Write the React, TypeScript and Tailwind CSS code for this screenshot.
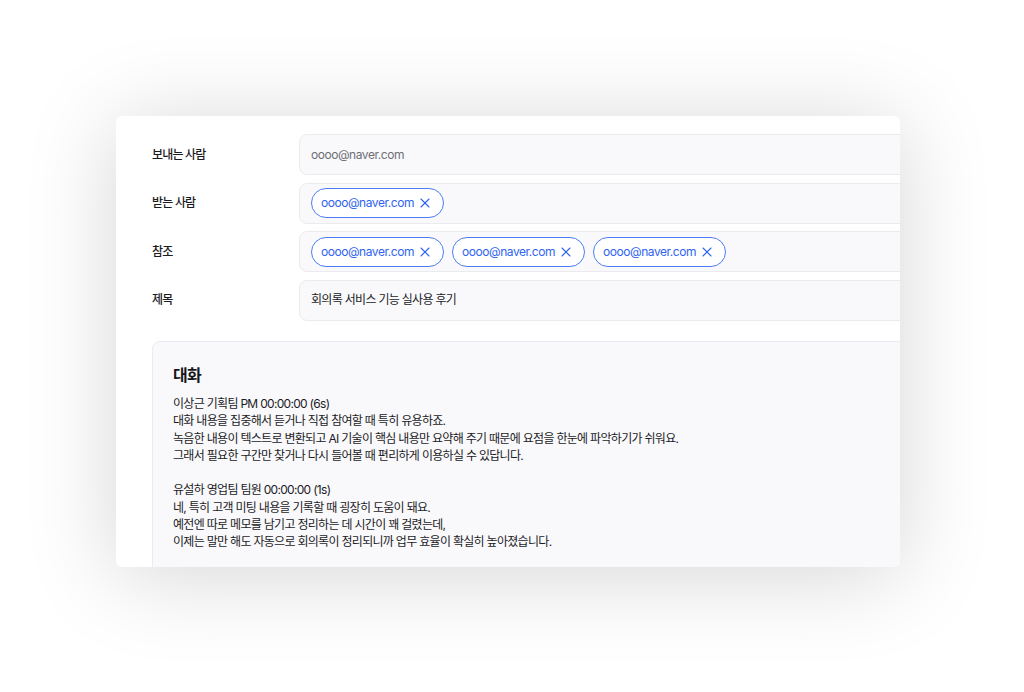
import { X } from "lucide-react";

const font = { fontFamily: '"Inter", "Noto Sans CJK KR", sans-serif' };

const Chip = ({ email }: { email: string }) => (
  <span className="flex h-[30px] items-center gap-[3px] rounded-full border border-[#4d7cf6] bg-white pl-[9px] pr-[10px] text-[12px] tracking-[-0.45px] text-[#2f64f0]">
    {email}
    <X className="h-[16px] w-[16px]" strokeWidth={1.6} />
  </span>
);

const Field = ({ label, children }: { label: string; children: React.ReactNode }) => (
  <div className="grid grid-cols-[147px_1fr] items-center">
    <span className="text-[12px] font-medium tracking-[-0.8px] text-[#1b1b1f]">{label}</span>
    <div className="flex h-[41px] w-[700px] items-center gap-[8px] rounded-[8px] border border-[#ebebef] bg-[#f9f9fb] px-[11px]">
      {children}
    </div>
  </div>
);

const App = () => {
  const email = "oooo@naver.com";
  return (
    <div className="min-h-screen bg-white pl-[116px] pt-[116px]" style={font}>
      <div className="h-[451px] w-[784px] overflow-hidden rounded-[6px] bg-white shadow-[0_8px_90px_rgba(0,0,0,0.17)]">
        <div className="flex w-[900px] flex-col gap-[7.5px] pl-[36px] pt-[18px]">
          <Field label="보내는 사람">
            <span className="text-[12px] tracking-[-0.45px] text-[#6e6e76]">{email}</span>
          </Field>
          <Field label="받는 사람">
            <Chip email={email} />
          </Field>
          <Field label="참조">
            <Chip email={email} />
            <Chip email={email} />
            <Chip email={email} />
          </Field>
          <Field label="제목">
            <span className="text-[12px] tracking-[-0.7px] text-[#1b1b1f]">회의록 서비스 기능 실사용 후기</span>
          </Field>

          <div className="mt-[13px] h-[300px] rounded-[8px] border border-[#ebebef] bg-[#f9f9fb] px-[20px] pt-[21px]">
            <h2 className="text-[16px] font-semibold tracking-[-0.6px] text-[#16161a]">대화</h2>
            <div className="mt-[8px] text-[12px] leading-[17.3px] tracking-[-0.7px] text-[#1b1b1f]">
              <p>이상근 기획팀 PM 00:00:00 (6s)</p>
              <p>대화 내용을 집중해서 듣거나 직접 참여할 때 특히 유용하죠.</p>
              <p>녹음한 내용이 텍스트로 변환되고 AI 기술이 핵심 내용만 요약해 주기 때문에 요점을 한눈에 파악하기가 쉬워요.</p>
              <p>그래서 필요한 구간만 찾거나 다시 들어볼 때 편리하게 이용하실 수 있답니다.</p>
              <p className="h-[17.3px]" />
              <p>유설하 영업팀 팀원 00:00:00 (1s)</p>
              <p>네, 특히 고객 미팅 내용을 기록할 때 굉장히 도움이 돼요.</p>
              <p>예전엔 따로 메모를 남기고 정리하는 데 시간이 꽤 걸렸는데,</p>
              <p>이제는 말만 해도 자동으로 회의록이 정리되니까 업무 효율이 확실히 높아졌습니다.</p>
            </div>
          </div>
        </div>
      </div>
    </div>
  );
};

export default App;
